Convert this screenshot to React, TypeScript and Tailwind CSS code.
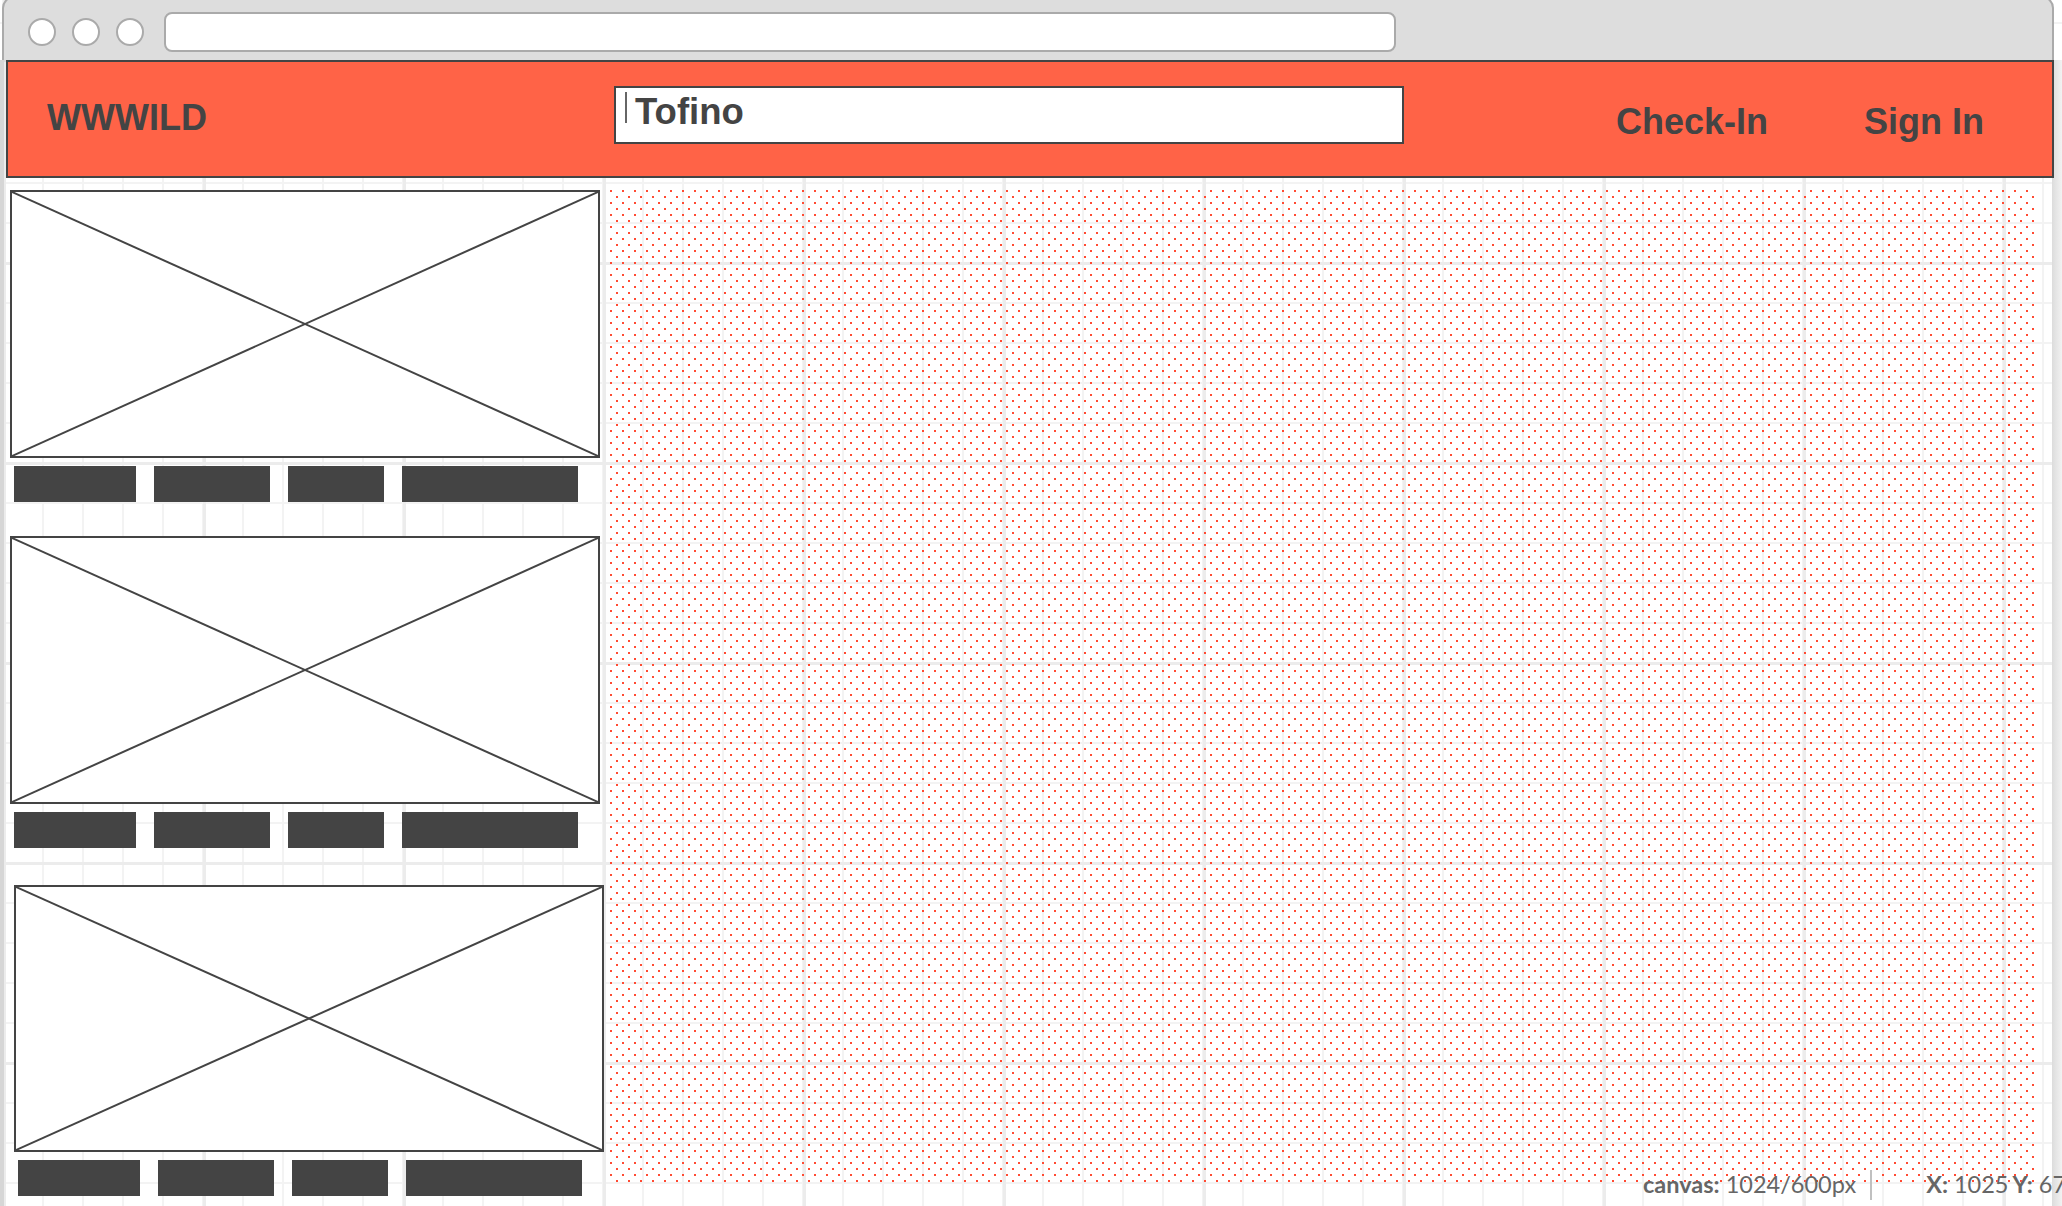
const Placeholder = ({ h }: { h: string }) => (
  <div className={`w-[590px] ${h} border-2 border-[#444] bg-white`}>
    <svg className="block w-full h-full" viewBox="0 0 100 100" preserveAspectRatio="none">
      <line x1="0" y1="0" x2="100" y2="100" stroke="#444" strokeWidth="2" vectorEffect="non-scaling-stroke" />
      <line x1="100" y1="0" x2="0" y2="100" stroke="#444" strokeWidth="2" vectorEffect="non-scaling-stroke" />
    </svg>
  </div>
);

const Chips = () => (
  <div className="mt-[8px] ml-[4px] flex gap-[18px]">
    <div className="w-[122px] h-[36px] bg-[#444]" />
    <div className="w-[116px] h-[36px] bg-[#444]" />
    <div className="w-[96px] h-[36px] bg-[#444]" />
    <div className="w-[176px] h-[36px] bg-[#444]" />
  </div>
);

const Dot = () => <div className="w-[28px] h-[28px] rounded-full border-2 border-[#aaa] bg-white" />;

export default function App() {
  return (
    <div
      className="relative w-[2062px] h-[1206px] overflow-hidden bg-white font-['Liberation_Sans',sans-serif] text-[#444]
      bg-[linear-gradient(90deg,#ececec_3px,transparent_3px),linear-gradient(180deg,#ececec_3px,transparent_3px),linear-gradient(90deg,#f3f3f3_2px,transparent_2px),linear-gradient(180deg,#f3f3f3_2px,transparent_2px)]
      bg-[size:200px_200px,200px_200px,40px_40px,40px_40px]
      bg-[position:3px_62px,3px_62px,2px_22px,2px_22px]"
    >
      <div className="ml-[2px] w-[2048px] h-[61px] -mt-[4px] box-content pt-[3px] bg-[#ddd] border-2 border-b-0 border-[#aaa] rounded-t-[12px] flex items-start">
        <div className="ml-[24px] mt-[17px] flex gap-[16px]">
          <Dot />
          <Dot />
          <Dot />
        </div>
        <div className="ml-[20px] mt-[11px] w-[1232px] h-[40px] rounded-[8px] border-2 border-[#aaa] bg-white" />
      </div>

      <div className="flex -mt-[2px] h-[1148px]">
        <div className="w-[4px] shrink-0 bg-[#d6d6d6]" />
        <div className="flex-1 min-w-0">
          <header className="relative ml-[2px] w-[2048px] h-[118px] border-2 border-[#444] bg-[#ff6347] flex items-start">
            <div className="ml-[39px] mt-[36px] w-[567px] text-[36px] leading-[40px] font-bold">WWWILD</div>
            <div className="mt-[24px] w-[790px] h-[58px] border-2 border-[#444] bg-white flex items-start">
              <span className="ml-[9px] mt-[4px] w-[2px] h-[31px] bg-[#666]" />
              <span className="ml-[8px] mt-[4px] text-[36.5px] leading-[40px] font-bold">Tofino</span>
            </div>
            <div className="ml-[212px] mt-[40px] text-[36px] leading-[40px] font-bold">Check-In</div>
            <div className="ml-[96px] mt-[40px] text-[36px] leading-[40px] font-bold">Sign In</div>
          </header>
          <div className="flex">
            <div className="w-[602px] shrink-0 pl-[6px] pt-[12px]">
              <Placeholder h="h-[268px]" />
              <Chips />
              <div className="mt-[34px]">
                <Placeholder h="h-[268px]" />
                <Chips />
              </div>
              <div className="mt-[37px] ml-[4px]">
                <Placeholder h="h-[267px]" />
                <Chips />
              </div>
            </div>
            <div
              className="mt-[8px] w-[1429px] h-[997px]
              bg-[radial-gradient(circle,#ff4b33_1px,transparent_1px),radial-gradient(circle,#ff4b33_1px,transparent_1px)]
              bg-[size:12px_12px] bg-[position:-1px_-1px,5px_5px]"
            />
          </div>
        </div>
        <div className="w-[10px] shrink-0 bg-[linear-gradient(90deg,#dcdcdc,#f2f2f2)]" />
      </div>

      <div className="absolute left-[1643px] top-[1168px] flex items-center h-[34px] whitespace-nowrap font-['Lato',sans-serif] text-[23.5px] text-[#666]">
        <span><b>canvas:</b> 1024/600px</span>
        <span className="ml-[14px] w-[2px] h-[30px] bg-[#c0c0c0]" />
        <span className="ml-[54px]"><b>X:</b> 1025<b className="ml-[4px]">Y:</b> 67</span>
      </div>
    </div>
  );
}
